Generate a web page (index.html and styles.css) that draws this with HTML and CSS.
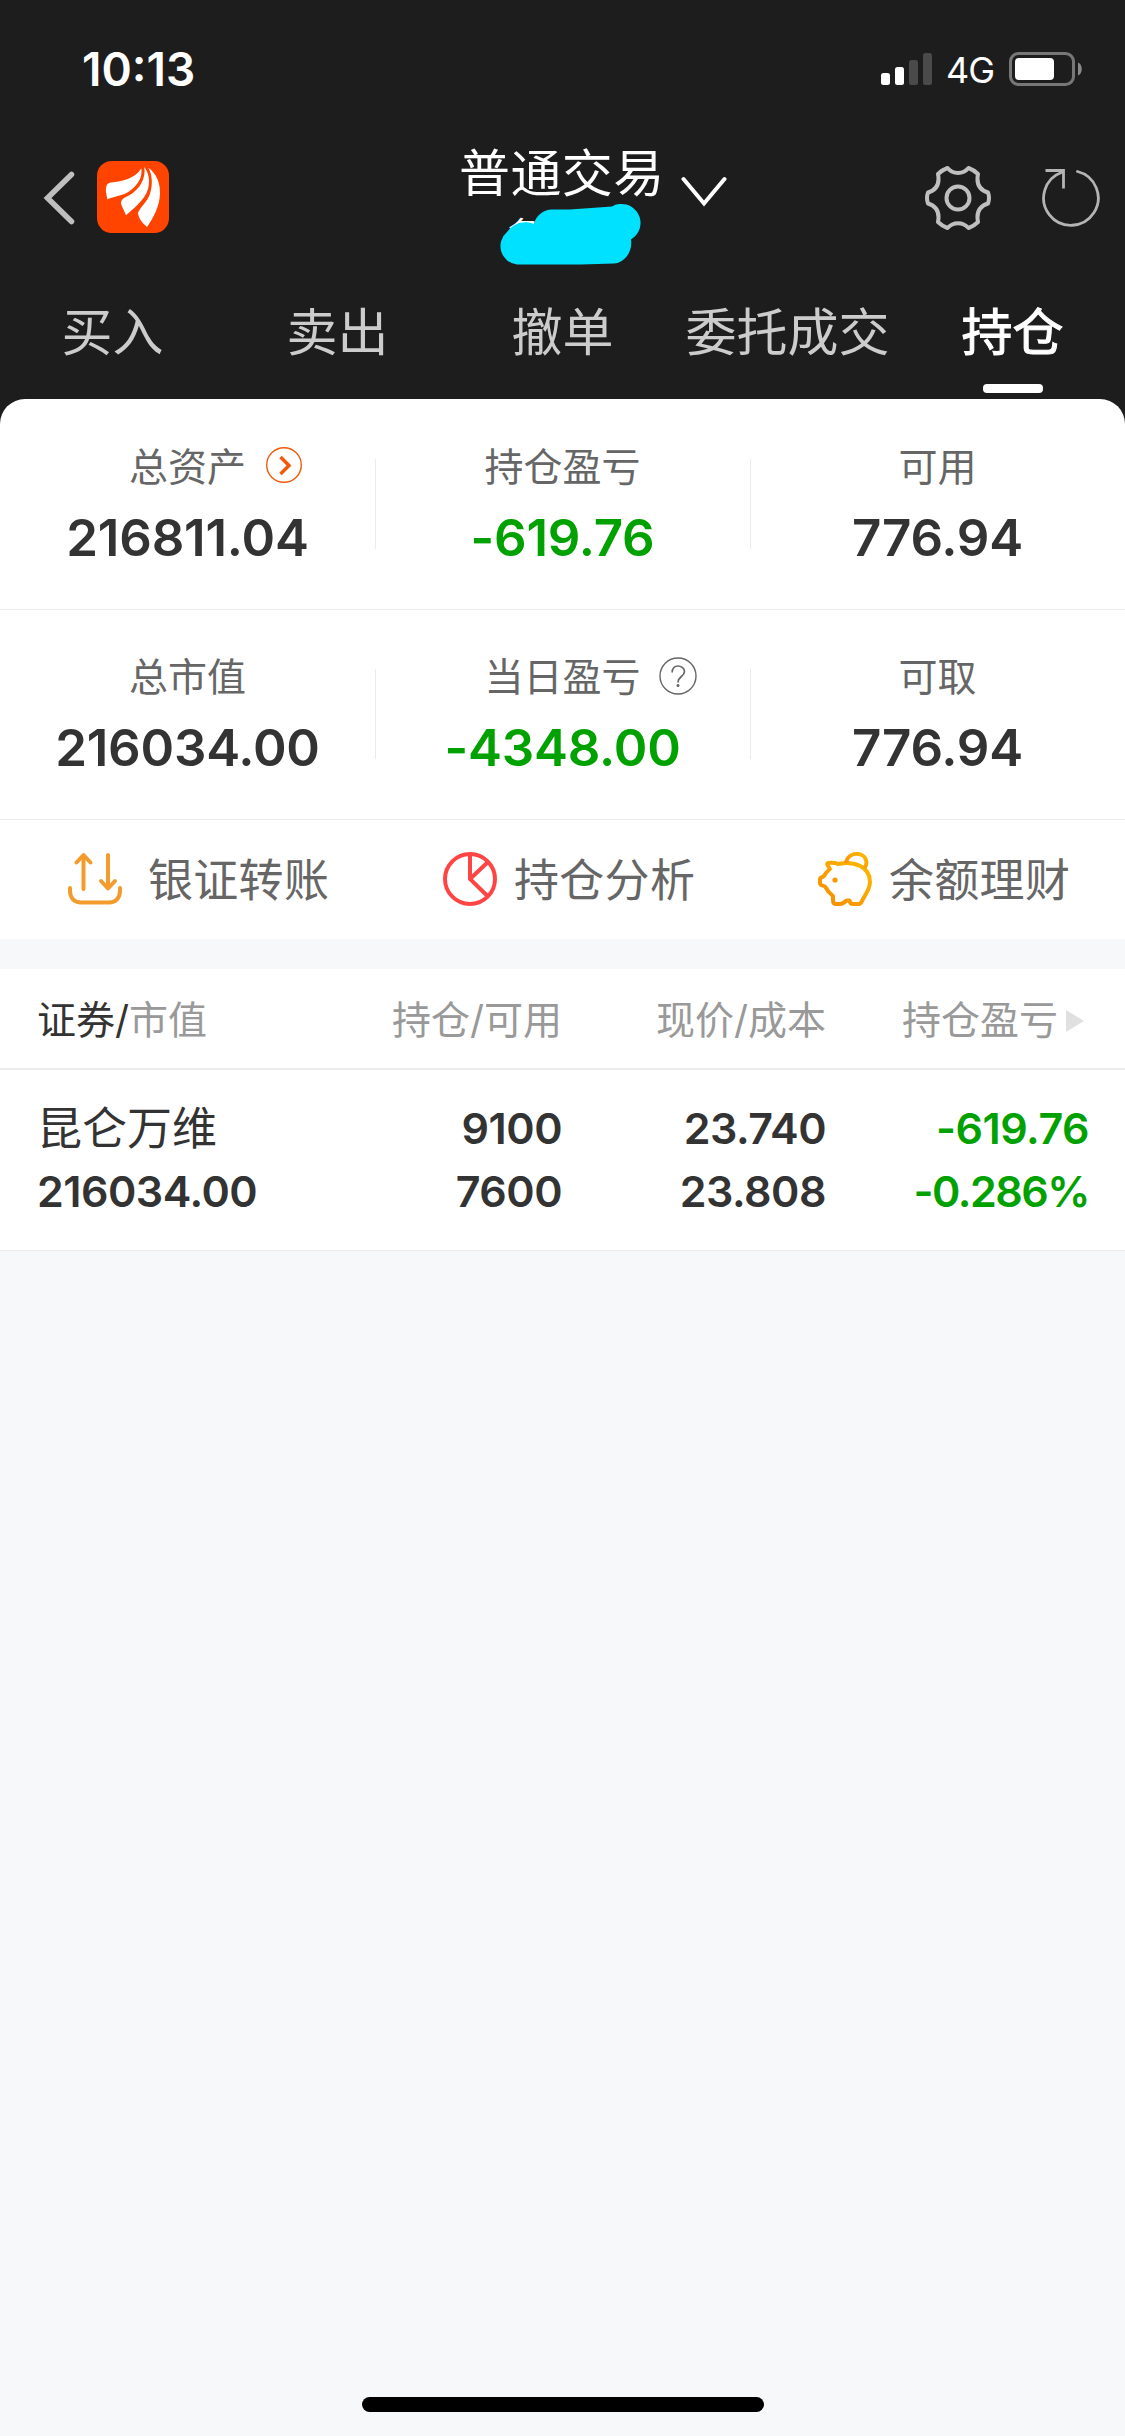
FILE: index.html
```
<!DOCTYPE html>
<html lang="zh-CN">
  <head>
    <meta charset="UTF-8" />
    <meta name="viewport" content="width=device-width, initial-scale=1.0" />
    <title>普通交易</title>
    <link rel="stylesheet" href="styles.css">
  </head>
  <body>
    <header>
      <div class="status">
        <span class="time">10:13</span>
        <svg class="signal" width="51" height="32" viewBox="0 0 51 32" fill="#fff">
          <rect x="0" y="20" width="9" height="12" rx="2.5" />
          <rect x="14" y="14" width="9" height="18" rx="2.5" />
          <rect x="28" y="7" width="9" height="25" rx="2.5" fill="#4a4a4a" />
          <rect x="42" y="0" width="9" height="32" rx="2.5" fill="#4a4a4a" />
        </svg>
        <span class="network">4G</span>
        <svg class="battery" width="74" height="34" viewBox="0 0 74 34">
          <rect x="1.5" y="1.5" width="63" height="31" rx="8" fill="none" stroke="#777" stroke-width="3" />
          <rect x="6" y="6" width="39" height="22" rx="4" fill="#fff" />
          <path d="M69 10.500c5 2 5 11 0 13z" fill="#8a8a8a" />
        </svg>
      </div>

      <nav>
        <svg class="back" width="32" height="54" viewBox="0 0 32 54">
          <path d="M28.500 3.500L4.500 27L28.500 50.500" fill="none" stroke="#bfbfbf" stroke-width="5.500" stroke-linecap="round" />
        </svg>
        <svg class="logo" width="72" height="72" viewBox="0 0 216 216">
          <rect width="216" height="216" rx="44" fill="#ff4400" />
          <g fill="#fff">
            <path d="M133 22C117 50 82 62 38 65C28 68 26 79 27 94L31 115C52 106 79 105 101 88C124 70 137 48 133 22Z" />
            <path d="M142 18C155 35 160 59 153 84C144 116 112 140 87 163C81 148 76 139 72 128C72 113 85 109 97 103C127 85 147 55 142 18Z" />
            <path d="M154 20C178 37 190 65 189 98C188 135 169 171 150 198C135 184 124 171 123 155C132 135 150 124 159 98C168 69 166 42 154 20Z" />
          </g>
        </svg>
        <div class="account">
          <h1>普通交易</h1>
          <p>名</p>
          <svg class="mask" width="142" height="62" viewBox="0 0 142 62">
            <path d="M18 61.500A18.500 18.500 0 0 1 8 29C15 20 25 17 35 21C37 12 45 6.500 53 6.500H71L113 3.500A19 19 0 0 1 132 36.500C134 49 125 60 115 60.500L82 61.500Z" fill="#00e1ff" />
          </svg>
        </div>
        <svg class="expand" width="46" height="32" viewBox="0 0 46 32">
          <path d="M2.500 3L23 27.500L43.500 3" fill="none" stroke="#fff" stroke-width="4" stroke-linecap="round" />
        </svg>
        <svg class="settings" width="68" height="66" viewBox="-34 -33 68 66" fill="none" stroke="#bfbfbf" stroke-width="4">
          <circle r="11.500" />
          <path stroke-linejoin="round" d="M-10.500 -30Q-16 -28 -20 -24C-18 -14 -22 -8 -30 -5.500Q-32 0 -30 5.500C-22 8 -18 14 -20 24Q-16 28 -10.500 30C-5 23.500 5 23.500 10.500 30Q16 28 20 24C18 14 22 8 30 5.500Q32 0 30 -5.500C22 -8 18 -14 20 -24Q16 -28 10.500 -30C5 -23.500 -5 -23.500 -10.500 -30Z" />
        </svg>
        <svg class="refresh" width="60" height="60" viewBox="-30 -30 60 60" fill="none" stroke="#b4b4b4" stroke-width="2.800">
          <path d="M6.500 -26.500A27.300 27.300 0 1 1 -9 -25.800" stroke-linecap="round" />
          <path d="M-25.500 -27.500H-7.500V-9.500" />
        </svg>
      </nav>

      <ul class="tabs">
        <li>买入</li>
        <li>卖出</li>
        <li>撤单</li>
        <li>委托成交</li>
        <li class="active">持仓</li>
      </ul>
    </header>

    <main>
      <section class="summary">
        <div class="cell">
          <h2>总资产
            <svg class="go" width="36" height="36" viewBox="0 0 36 36" fill="none" stroke="#f05a0a">
              <circle cx="18" cy="18" r="17.300" stroke-width="1.400" />
              <path d="M14.500 10L23 18.500L14.500 27" stroke-width="3.500" />
            </svg>
          </h2>
          <p>216811.04</p>
        </div>
        <div class="cell">
          <h2>持仓盈亏</h2>
          <p class="down">-619.76</p>
        </div>
        <div class="cell">
          <h2>可用</h2>
          <p>776.94</p>
        </div>
        <div class="cell">
          <h2>总市值</h2>
          <p>216034.00</p>
        </div>
        <div class="cell">
          <h2>当日盈亏
            <svg class="help" width="38" height="38" viewBox="0 0 38 38" fill="none" stroke="#666" stroke-width="1.400">
              <circle cx="19" cy="19" r="18" />
              <path d="M13.200 15.500C13 11.500 15.500 9 19 9C22.500 9 25.500 11.500 25.500 14.500C25.500 19 19.200 20 19.200 24.500V25.500" stroke-width="1.700" />
              <circle cx="19" cy="28.500" r="1.500" fill="#666" stroke="none" />
            </svg>
          </h2>
          <p class="down">-4348.00</p>
        </div>
        <div class="cell">
          <h2>可取</h2>
          <p>776.94</p>
        </div>
      </section>

      <section class="actions">
        <a class="transfer">
          <svg width="54" height="54" viewBox="0 0 54 54" fill="none" stroke="#f39b2d" stroke-width="4" stroke-linecap="round" stroke-linejoin="round">
            <path d="M15.500 37V3.500M8.500 10.500L15.500 3L22.500 10.500" />
            <path d="M40 3V36.500M33 29L40 36.500L47 29" />
            <path d="M2 36V39C2 46 6.500 50.500 13 50.500H41C47.500 50.500 52 46 52 39V36" />
          </svg>
          <span>银证转账</span>
        </a>
        <a>
          <svg width="54" height="54" viewBox="0 0 54 54" fill="none" stroke="#ff4444" stroke-width="4">
            <circle cx="27" cy="27" r="25" />
            <path d="M27 2V27L45 44.500M27 27L45 10" />
          </svg>
          <span>持仓分析</span>
        </a>
        <a>
          <svg width="54" height="54" viewBox="0 0 54 54" fill="none" stroke="url(#gold)" stroke-width="4" stroke-linejoin="round">
            <defs>
              <linearGradient id="gold" x1="1" y1="0" x2="0" y2="1">
                <stop offset="0" stop-color="#ffba00" />
                <stop offset="1" stop-color="#f68a00" />
              </linearGradient>
            </defs>
            <path d="M10 11C15 10.500 18 11 20 12C36 9 52 14 52 30C52 38 46 44 43.500 50Q42.500 52 40 52H35Q32 52 31.500 48.500H28.500Q25 52 22 52H18Q15 52 15 48V44C11 41 9 38 7 34.500L3 33Q2 32.500 2 31V27Q2 26 3.500 25.500L6 24Q8 20 12 17L9.500 13Q9 11.500 10 11Z" />
            <path d="M28 11C30 -1 47 -1 48.500 10Q48.500 14 46 17" />
            <circle cx="17" cy="28" r="2.600" fill="#f99500" stroke="none" />
          </svg>
          <span>余额理财</span>
        </a>
      </section>

      <section class="positions">
        <div class="row head">
          <span><b>证券/</b>市值</span>
          <span>持仓/可用</span>
          <span>现价/成本</span>
          <span class="more">持仓盈亏</span>
        </div>
        <div class="row">
          <span class="name">昆仑万维</span>
          <span>9100</span>
          <span>23.740</span>
          <span class="down">-619.76</span>
          <span>216034.00</span>
          <span>7600</span>
          <span>23.808</span>
          <span class="down rate">-0.286%</span>
        </div>
      </section>
    </main>

    <div class="home"></div>
  </body>
</html>
```

FILE: styles.css
```
* {
  box-sizing: border-box;
  margin: 0;
  padding: 0;
}
body {
  width: 1125px;
  height: 2436px;
  display: flex;
  flex-direction: column;
  overflow: hidden;
  background: #f7f8fa;
  color: #333;
  font-family: Inter, "Noto Sans CJK SC", sans-serif;
}
svg {
  display: block;
  flex: none;
}
header {
  height: 424px;
  margin-bottom: -25px;
  background: #1d1d1d;
  color: #fff;
}

.status {
  height: 137px;
  padding: 0 42px 0 82px;
  display: flex;
  align-items: center;

  & .time {
    margin-right: auto;
    font-size: 46px;
    font-weight: 600;
  }
  & .network {
    margin: 3px 15px 0 14px;
    font-size: 36px;
    font-weight: 400;
    letter-spacing: -1px;
  }
}

nav {
  height: 122px;
  padding: 0 24px 0 43px;
  display: flex;
  align-items: center;

  & .logo {
    margin: -2px 0 0 22px;
  }
  & .account {
    position: relative;
    align-self: flex-start;
    width: 204px;
    margin-left: 290px;
    text-align: center;
  }
  & h1 {
    margin-top: 7px;
    font-size: 51px;
    font-weight: 400;
    line-height: 60px;
    letter-spacing: 0.4px;
    white-space: nowrap;
  }
  & p {
    padding-left: 48px;
    font-size: 33px;
    line-height: 60px;
    text-align: left;
  }
  /* hides the account holder */
  & .mask {
    position: absolute;
    left: 40px;
    top: 66px;
  }
  & .expand {
    margin: -12px auto 0 18px;
  }
  & .refresh {
    margin-left: 49px;
  }
}

.tabs {
  height: 140px;
  display: flex;
  list-style: none;
  color: #ccc;
  font-size: 51px;
  line-height: 60px;

  & li {
    flex: 1;
    display: flex;
    flex-direction: column;
    align-items: center;
    padding-top: 44px;
    white-space: nowrap;
  }
  & .active {
    color: #fff;
    -webkit-text-stroke: 1px #fff;
  }
  & .active::after {
    content: "";
    width: 60px;
    height: 9px;
    margin-top: 21px;
    border-radius: 4px;
    background: #fff;
  }
}

main {
  background: #fff;
  border-radius: 25px 25px 0 0;
}

.summary {
  display: grid;
  grid-template-columns: repeat(3, 1fr);

  & .cell {
    position: relative;
    height: 210px;
    padding-top: 44px;
    display: flex;
    flex-direction: column;
    align-items: center;
    box-shadow: 0 1px #ebebeb;
  }
  & .cell:not(:nth-child(3n))::after {
    content: "";
    position: absolute;
    right: -1px;
    top: 60px;
    width: 1px;
    height: 90px;
    background: #ebebeb;
  }
  & h2 {
    position: relative;
    color: #666;
    font-size: 39px;
    font-weight: 400;
    line-height: 48px;
  }
  & h2 svg {
    position: absolute;
    left: calc(100% + 20px);
    top: 4px;
  }
  & h2 .help {
    left: calc(100% + 18px);
  }
  & p {
    margin-top: 17px;
    font-size: 51px;
    font-weight: 600;
    line-height: 60px;
    letter-spacing: -0.2px;
  }
}
.down,
.summary .down {
  color: #00a100;
}

.actions {
  height: 120px;
  display: grid;
  grid-template-columns: repeat(3, 1fr);
  color: #666;
  font-size: 45px;

  & a {
    padding-left: 68px;
    display: flex;
    align-items: center;
    gap: 17px;
    white-space: nowrap;
  }
  & span {
    margin-top: -4px;
    letter-spacing: 0.3px;
  }
  & .transfer {
    gap: 26px;
  }
}

.positions {
  border-top: 30px solid #f7f8fa;
  border-bottom: 1px solid #ebebeb;

  & .row {
    height: 180px;
    padding: 27px 36px 0 37px;
    display: grid;
    grid-template-columns: 262px 263px 264px 263px;
    grid-auto-rows: 63px;
    font-size: 43px;
    font-weight: 600;
    line-height: 63px;
    letter-spacing: -0.5px;
    text-align: right;
  }
  & .row > :nth-child(4n + 1) {
    text-align: left;
  }
  & .name {
    font-size: 45px;
    font-weight: 400;
    letter-spacing: 0;
  }
  & .row .rate {
    letter-spacing: -1.5px;
  }
  & .row.head {
    height: 101px;
    padding-top: 19px;
    border-bottom: 2px solid #ededed;
    color: #999;
    font-size: 39px;
    font-weight: 400;
    letter-spacing: 0;
  }
  & b {
    color: #333;
    font-weight: 400;
  }
  & .more {
    display: flex;
    align-items: center;
    justify-content: flex-end;
  }
  & .more::after {
    content: "";
    margin: 2px 5px 0 8px;
    border: solid transparent;
    border-width: 11px 0 11px 18px;
    border-left-color: #e0e0e0;
  }
}

.home {
  width: 402px;
  height: 15px;
  margin: auto auto 24px;
  border-radius: 8px;
  background: #000;
}
```
